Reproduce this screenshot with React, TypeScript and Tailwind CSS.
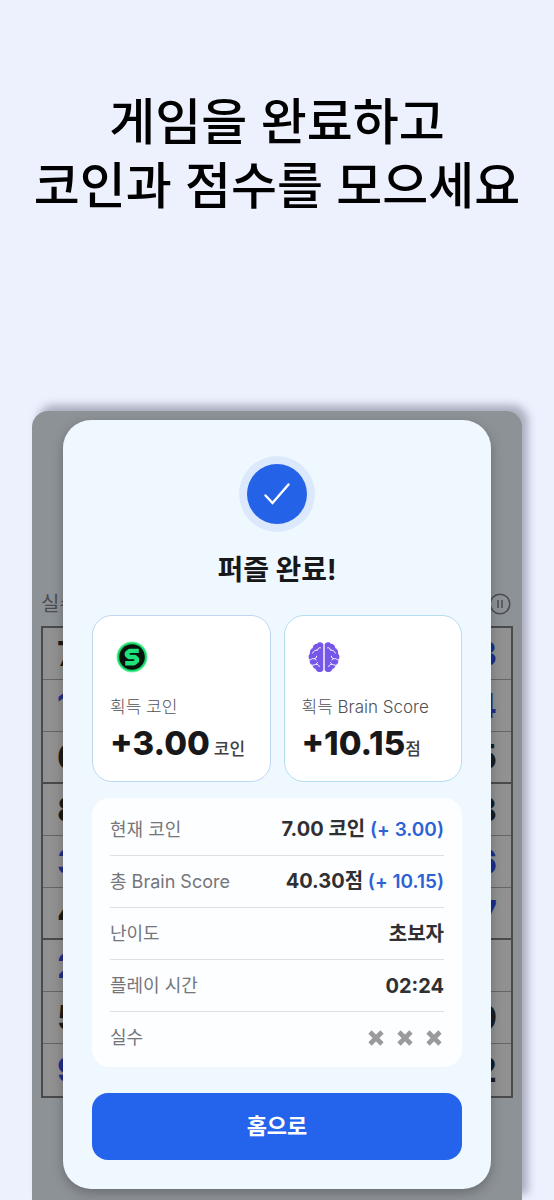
import type { ReactNode } from "react";

const leftColumn = [
  { value: "7", mine: false },
  { value: "1", mine: true },
  { value: "6", mine: false },
  { value: "8", mine: false },
  { value: "3", mine: true },
  { value: "4", mine: false },
  { value: "2", mine: true },
  { value: "5", mine: false },
  { value: "9", mine: true },
];

const rightColumn = [
  { value: "3", mine: true },
  { value: "4", mine: true },
  { value: "5", mine: false },
  { value: "8", mine: false },
  { value: "6", mine: true },
  { value: "7", mine: true },
  { value: "", mine: false },
  { value: "9", mine: false },
  { value: "2", mine: false },
];

function CoinIcon() {
  return (
    <svg viewBox="0 0 32 32" className="size-8" aria-hidden="true">
      <circle cx="16" cy="16" r="15.5" fill="#7df0ac" />
      <circle cx="16" cy="16" r="14.6" fill="#12d868" />
      <circle cx="16" cy="16" r="12.8" fill="#06130d" />
      <path
        d="M22.8 9.9H13.6L10.9 12.2V14L13.2 16H18.8L21 17.9V19.8L18.2 22.2H9.2"
        fill="none"
        stroke="#1fe27a"
        strokeWidth="4.4"
        strokeLinejoin="round"
      />
    </svg>
  );
}

function BrainHalf() {
  return (
    <>
      <path
        d="M15.3 3.2C14.4 .8 10.6 .5 9.2 2.7C6.6 2.5 4.6 4.6 4.8 7C2.4 8 1.3 10.4 2.1 12.6C.2 14.3 .1 17.2 1.8 18.8C1.2 21.4 2.5 23.6 4.6 24.3C4.7 26.4 6 27.8 7.6 28C8.2 31.4 13.8 32.4 15.3 29Z"
        fill="#7657ea"
      />
      <path
        d="M12.4 6.8C10.4 6.5 9.7 7.6 9.6 9.2C7.4 8.7 5.5 9.9 4.7 12M2.2 19C4.4 16.9 6.8 17.2 8.2 19M8.6 15.2C8.5 16.8 7.6 17.6 6.3 17.6M5 24C7 24.2 8.5 23.3 9.4 21.7M8.4 23.2C9.7 23.2 10.8 24 11.2 25.5"
        fill="none"
        stroke="#fff"
        strokeWidth="1"
        strokeLinecap="round"
      />
    </>
  );
}

function BrainIcon() {
  return (
    <svg viewBox="0 0 32 32" className="size-8" aria-hidden="true">
      <BrainHalf />
      <g transform="translate(32 0) scale(-1 1)">
        <BrainHalf />
      </g>
    </svg>
  );
}

function MissIcon() {
  return (
    <svg viewBox="0 0 16 16" className="size-4" aria-hidden="true">
      <path d="M2 2L14 14M14 2L2 14" stroke="#9a9a9e" strokeWidth="4.6" />
    </svg>
  );
}

function PauseIcon() {
  return (
    <svg viewBox="0 0 22 22" className="size-[22px]" fill="none" stroke="#4b4d51" aria-hidden="true">
      <circle cx="11" cy="11" r="9.8" strokeWidth="1.5" />
      <path d="M9 7V15M13 7V15" strokeWidth="1.5" />
    </svg>
  );
}

function Digit({ value, mine }: { value: string; mine: boolean }) {
  return (
    <span className={mine ? "text-[#1f2f8c]" : "text-[#1c1c1c]"}>{value}</span>
  );
}

function Board() {
  return (
    <div className="px-[9px] pt-[181px]">
      <div className="flex h-6 items-center justify-between">
        <span className="text-xl leading-6 text-[#4b4d51]">실수</span>
        <button type="button" aria-label="일시정지" className="mr-[2px]">
          <PauseIcon />
        </button>
      </div>
      <div className="mt-[10px] border-[2px] border-[#4a4a4a] bg-[#919191]">
        {leftColumn.map((cell, i) => (
          <div
            key={i}
            className={`flex h-[52px] items-center justify-between px-[14px] text-[34px] leading-none font-bold ${
              i === 8 ? "" : i % 3 === 2 ? "border-b-2 border-[#4a4a4a]" : "border-b border-[#666]"
            }`}
          >
            <Digit {...cell} />
            <Digit {...rightColumn[i]} />
          </div>
        ))}
      </div>
    </div>
  );
}

type RewardProps = {
  icon: ReactNode;
  label: string;
  value: string;
  unit: ReactNode;
  border: string;
};

function RewardCard({ icon, label, value, unit, border }: RewardProps) {
  return (
    <div className={`flex-1 rounded-[20px] border bg-white px-[17px] pt-[25px] pb-[14px] ${border}`}>
      <div className="pl-[6px]">{icon}</div>
      <p className="mt-[22px] text-[17px] leading-6 font-light text-[#505156]">{label}</p>
      <p className="flex h-12 items-baseline text-[33px] leading-[48px] font-extrabold whitespace-nowrap text-[#18181a]">
        {value}
        {unit}
      </p>
    </div>
  );
}

function Row({ label, children }: { label: string; children: ReactNode }) {
  return (
    <div className="flex h-[52px] items-center justify-between border-b border-[#dfe0e3] last:border-b-0">
      <dt className="text-lg leading-6 text-[#75767b]">{label}</dt>
      <dd className="text-xl leading-6 font-bold text-[#303033]">{children}</dd>
    </div>
  );
}

function ResultDialog() {
  return (
    <section
      aria-labelledby="result-title"
      className="flex flex-col rounded-[28px] bg-[#f0f8ff] px-[29px] pt-9 pb-[29px] shadow-[0_4px_12px_rgba(0,0,0,0.25)]"
    >
      <div className="flex size-[76px] items-center justify-center self-center rounded-full bg-[#dce9fd]">
        <div className="flex size-[60px] items-center justify-center rounded-full bg-[#2462e8]">
          <svg viewBox="0 0 28 24" className="h-6 w-7" aria-hidden="true">
            <path d="M2.5 13.5L9.5 21L25.5 2.5" fill="none" stroke="#fff" strokeWidth="2.4" strokeLinecap="round" />
          </svg>
        </div>
      </div>
      <h2 id="result-title" className="mt-5 text-center text-[28px] leading-9 font-bold text-[#18181a]">
        퍼즐 완료!
      </h2>

      <div className="mt-[27px] flex gap-[13px]">
        <RewardCard
          icon={<CoinIcon />}
          label="획득 코인"
          value="+3.00"
          unit={<span className="ml-1 text-[17px] leading-6 font-medium text-[#404044]">코인</span>}
          border="border-[#bfd6f2]"
        />
        <RewardCard
          icon={<BrainIcon />}
          label="획득 Brain Score"
          value="+10.15"
          unit={<span className="text-[17px] leading-6 font-medium text-[#404044]">점</span>}
          border="border-[#b4dff0]"
        />
      </div>

      <dl className="mt-4 rounded-[18px] bg-[#fdfeff] px-[18px] pt-[6px] pb-[3px]">
        <Row label="현재 코인">
          7.00 코인 <span className="text-[19px] font-semibold text-[#2c62d6]">(+ 3.00)</span>
        </Row>
        <Row label="총 Brain Score">
          40.30점 <span className="text-[19px] font-semibold text-[#2c62d6]">(+ 10.15)</span>
        </Row>
        <Row label="난이도">초보자</Row>
        <Row label="플레이 시간">02:24</Row>
        <Row label="실수">
          <span className="flex gap-[13px] pr-[2px]">
            <MissIcon />
            <MissIcon />
            <MissIcon />
          </span>
        </Row>
      </dl>

      <button type="button" className="mt-[26px] h-[67px] rounded-2xl bg-[#2463eb] text-[22px] font-bold text-white">
        홈으로
      </button>
    </section>
  );
}

export default function App() {
  return (
    <main className="flex min-h-screen flex-col overflow-hidden bg-[#edf1fe] font-['Inter','Noto_Sans_CJK_KR',sans-serif]">
      <h1 className="pt-[90px] text-center text-[50px] leading-[64px] font-medium whitespace-nowrap text-black">
        게임을 완료하고
        <br />
        코인과 점수를 모으세요
      </h1>

      <div className="mx-8 mt-[193px] grid flex-1 rounded-t-2xl bg-[#8d9297] shadow-[6px_-6px_8px_rgba(70,70,95,0.4)]">
        <div className="col-start-1 row-start-1">
          <Board />
        </div>
        <div className="col-start-1 row-start-1 px-[31px] pt-[9px] pb-[11px]">
          <ResultDialog />
        </div>
      </div>
    </main>
  );
}
